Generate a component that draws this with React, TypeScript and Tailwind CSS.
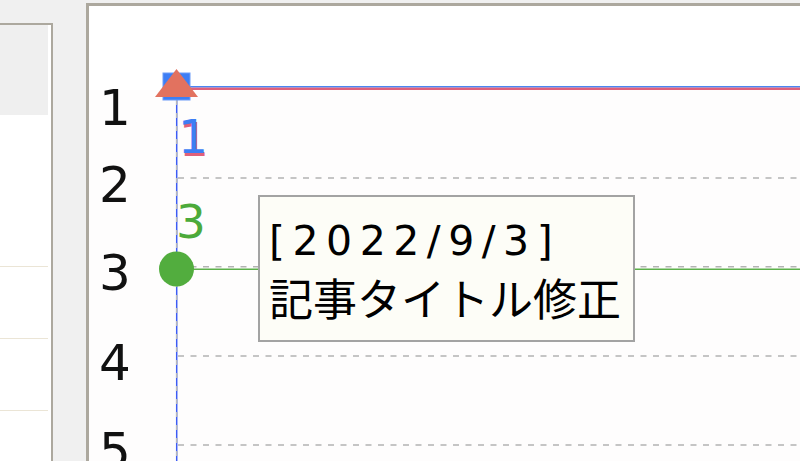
import React from "react";

const axisLabels = [
  { t: "1", h: "h-[77px]" },
  { t: "2", h: "h-[88px]" },
  { t: "3", h: "h-[90px]" },
  { t: "4", h: "h-[88px]" },
  { t: "5", h: "h-[50px]" },
];

const dashedRows = [172, 260.7, 350, 439];

export default function App() {
  return (
    <div className="w-[800px] h-[461px] bg-[#f0f0f0] flex overflow-hidden font-['DejaVu_Sans',sans-serif]">
      {/* left panel */}
      <div className="w-[53px] h-[440px] mt-[23px] shrink-0 border-t-2 border-r-2 border-[#aca89e] bg-white">
        <div className="w-[48px] flex flex-col">
          <div className="h-[90px] bg-[#efefef]" />
          <div className="h-[152px] border-b border-[#ebe5d6]" />
          <div className="h-[72px] border-b border-[#ebe5d6]" />
          <div className="h-[72px] border-b border-[#ebe5d6]" />
        </div>
      </div>

      {/* right panel */}
      <div className="ml-[33px] mt-[3px] w-[714px] h-[470px] shrink-0 border-t-[3px] border-l-[3px] border-[#aca89e] bg-white relative">
        <div className="absolute left-0 right-0 top-[84px] bottom-0 bg-[#fefdfd]" />
        <svg className="absolute inset-0" width="711" height="467">
          {dashedRows.map((y) => (
            <line key={y} x1="89" x2="711" y1={y} y2={y} stroke="#b3b3b3" strokeWidth="1.5" strokeDasharray="6 6.5" />
          ))}
          <line x1="87" x2="711" y1="263.3" y2="263.3" stroke="#5cb04a" strokeWidth="1.5" />
          <rect x="87" y="80" width="624" height="1.6" fill="#4a86f2" />
          <rect x="87" y="81.6" width="624" height="2.4" fill="#e0607a" />
          <line x1="87.7" x2="87.7" y1="91" y2="467" stroke="#3d5cf5" strokeWidth="1.5" />
          <line x1="87.7" x2="87.7" y1="94" y2="467" stroke="#b8b8b8" strokeWidth="1.5" strokeDasharray="5 8" />
          <rect x="74" y="67" width="27" height="27" fill="#3d7ef5" stroke="#6c9cf8" strokeWidth="1" />
          <polygon points="87.5,63 66,91 109,91" fill="#e2725f" />
          <circle cx="87.5" cy="263" r="17.5" fill="#52ad3e" />
        </svg>

        {/* axis labels */}
        <div className="absolute left-0 top-[77px] w-[52px] flex flex-col">
          {axisLabels.map((l) => (
            <div key={l.t} className={`${l.h} text-center text-[50px] leading-[50px] text-[#111]`}>
              {l.t}
            </div>
          ))}
        </div>

        {/* point labels */}
        <div className="absolute left-[90px] top-[110px] text-[47px] leading-[47px] text-[#e0607a]">1</div>
        <div className="absolute left-[89px] top-[107px] text-[47px] leading-[47px] text-[#3d7ef5]">1</div>
        <div className="absolute left-[87px] top-[192px] text-[47px] leading-[47px] text-[#4caa3a]">3</div>

        {/* tooltip */}
        <div className="absolute left-[169px] top-[189px] w-[377px] h-[147px] border-2 border-[#a3a3a3] bg-[#fdfdf7] pl-[9px] pt-[19px] text-black">
          <div className="text-[41px] leading-[50px] tracking-[7.5px] whitespace-nowrap font-['DejaVu_Sans',sans-serif]">[2022/9/3]</div>
          <div className="mt-[6px] text-[44px] leading-[50px] whitespace-nowrap font-['Noto_Sans_CJK_JP',sans-serif]">記事タイトル修正</div>
        </div>
      </div>
    </div>
  );
}
